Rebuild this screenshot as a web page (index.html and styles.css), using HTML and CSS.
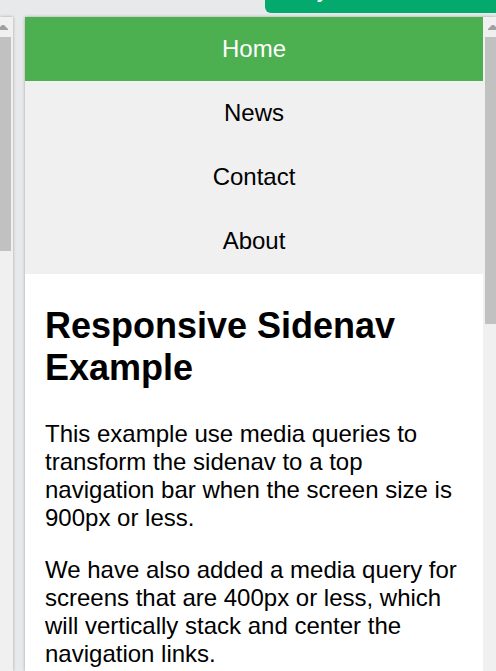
FILE: index.html
```html
<!DOCTYPE html>
<html lang="en">
<head>
<meta charset="utf-8">
<title>Responsive Sidenav Example</title>
<link rel="stylesheet" href="styles.css">
</head>
<body>
<header class="toolbar">
  <a class="try-button" href="#try">Try it Yourself »</a>
</header>
<div class="workspace">
  <div class="editor">
    <div class="scrollbar scrollbar-left">
      <svg class="arrow" viewBox="0 0 10 6" aria-hidden="true"><path d="M0 6v-1l4-4h2l4 4v1z"/></svg>
      <div class="thumb"></div>
    </div>
  </div>
  <div class="preview">
    <main class="page">
      <nav class="sidenav">
        <a class="active" href="#home">Home</a>
        <a href="#news">News</a>
        <a href="#contact">Contact</a>
        <a href="#about">About</a>
      </nav>
      <article class="content">
        <h1>Responsive Sidenav Example</h1>
        <p>This example use media queries to transform the sidenav to a top navigation bar when the screen size is 900px or less.</p>
        <p>We have also added a media query for screens that are 400px or less, which will vertically stack and center the navigation links.</p>
      </article>
    </main>
    <div class="scrollbar scrollbar-right">
      <svg class="arrow" viewBox="0 0 10 6" aria-hidden="true"><path d="M0 6v-1l4-4h2l4 4v1z"/></svg>
      <div class="thumb thumb-long"></div>
    </div>
  </div>
</div>
</body>
</html>
```
FILE: styles.css
```css
* {
  box-sizing: border-box;
}

body {
  margin: 0;
  height: 100vh;
  display: flex;
  flex-direction: column;
  overflow: hidden;
  background: #e7e9eb;
  color: #000;
  font: 24px/28px "Liberation Sans", Arial, sans-serif;
}

.toolbar {
  flex: none;
  height: 17px;
  padding: 0 0 4px 265px;
  display: flex;
  align-items: flex-end;
  overflow: hidden;
}

.try-button {
  flex: 1 0 auto;
  padding: 10px 30px;
  border-radius: 6px 0 0 6px;
  background: #04aa6d;
  color: #fff;
  text-decoration: none;
}

.workspace {
  flex: 1;
  min-height: 0;
  display: flex;
  gap: 12px;
}

.editor {
  flex: none;
  display: flex;
  box-shadow: 0 0 3px rgba(0, 0, 0, 0.3);
}

.preview {
  flex: 1;
  min-width: 0;
  display: flex;
  background: #fff;
  box-shadow: 0 0 3px rgba(0, 0, 0, 0.3);
}

.page {
  flex: 1;
  min-width: 0;
  overflow: hidden;
}

.scrollbar {
  flex: none;
  width: 13px;
  display: flex;
  flex-direction: column;
  background: #f0f0f0;
}

.scrollbar-left {
  padding-right: 2px;
}

.scrollbar-right {
  padding-left: 2px;
}

.arrow {
  flex: none;
  width: 10px;
  height: 6px;
  margin: 7px 0;
  fill: #a0a0a0;
}

.scrollbar-left .arrow {
  margin-left: -2px;
}

.scrollbar-right .arrow {
  margin-left: 3px;
}

.thumb {
  height: 214px;
  background: #c1c1c1;
}

.thumb-long {
  height: 287px;
}

.sidenav {
  display: flex;
  flex-direction: column;
  padding-bottom: 1px;
  background: #f0f0f0;
}

.sidenav a {
  padding: 18px 24px;
  color: #000;
  text-align: center;
  text-decoration: none;
}

.sidenav .active {
  background: #4caf50;
  color: #fff;
}

.content {
  padding: 31px 20px 0;
}

.content h1 {
  margin: 0 0 31px;
  font-size: 36px;
  line-height: 42px;
}

.content p {
  margin: 0 0 24px;
}

.content p:last-child {
  margin-bottom: 0;
}
```
